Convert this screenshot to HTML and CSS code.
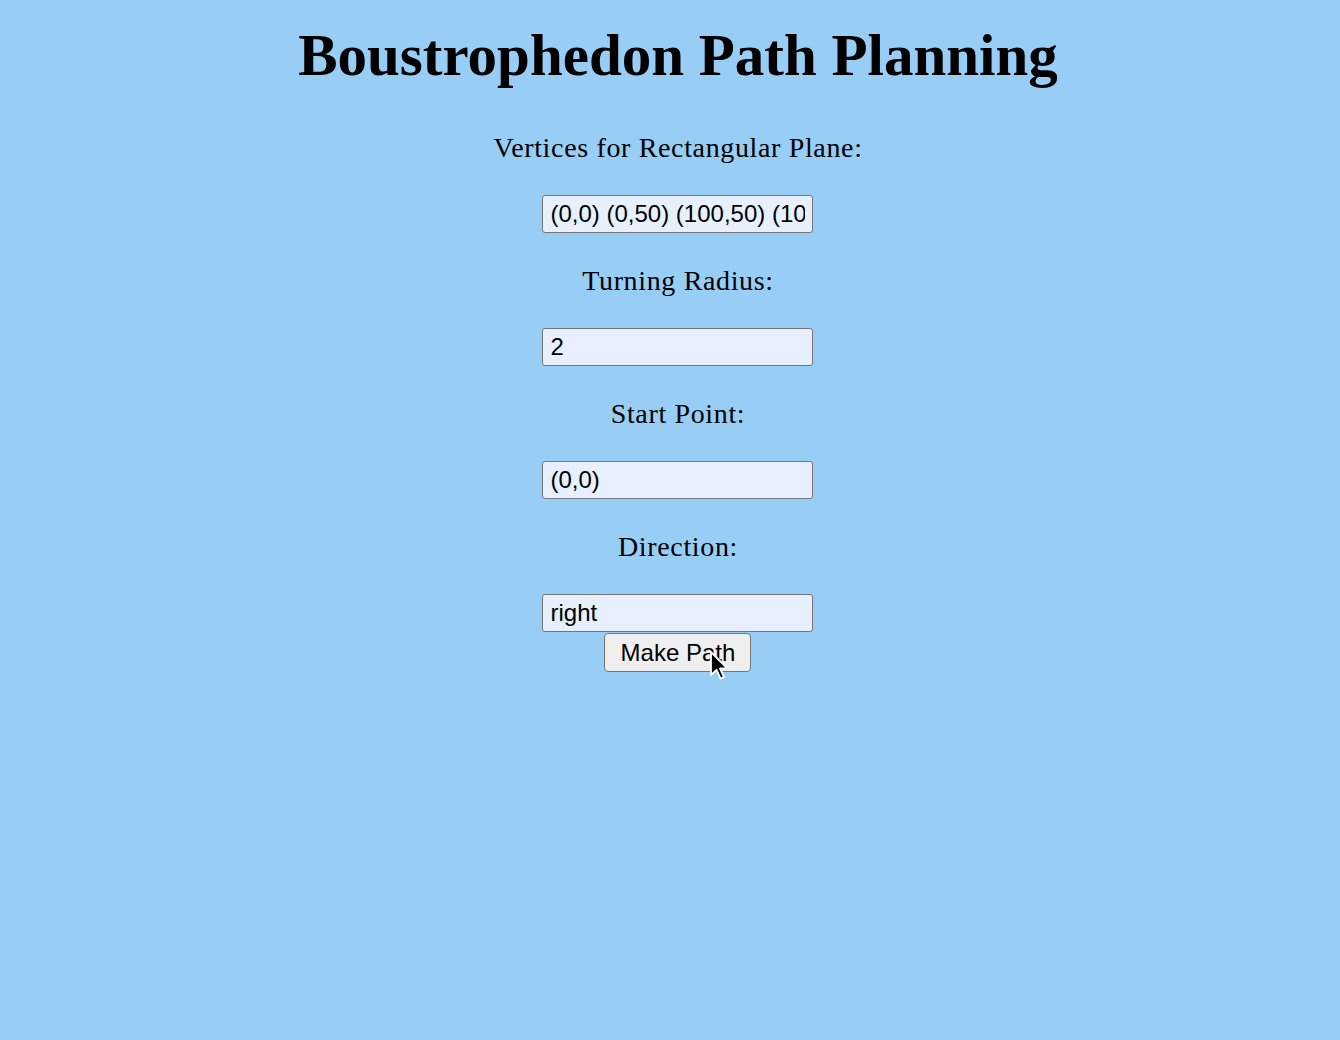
FILE: index.html
```html
<!DOCTYPE html>
<html lang="en">
<head>
<meta charset="utf-8">
<title>Boustrophedon Path Planning</title>
<link rel="stylesheet" href="styles.css">
</head>
<body>
<main class="page">
  <h1 class="title">Boustrophedon Path Planning</h1>
  <form class="form">
    <label class="label" for="vertices">Vertices for Rectangular Plane:</label>
    <input class="field" id="vertices" type="text" value="(0,0) (0,50) (100,50) (100,0)">
    <label class="label" for="radius">Turning Radius:</label>
    <input class="field" id="radius" type="text" value="2">
    <label class="label" for="start">Start Point:</label>
    <input class="field" id="start" type="text" value="(0,0)">
    <label class="label" for="direction">Direction:</label>
    <input class="field" id="direction" type="text" value="right">
    <div class="button-wrap">
      <button class="button" type="button">Make Path</button>
      <svg class="cursor" width="22" height="32" viewBox="0 0 22 32" aria-hidden="true">
        <path d="M2 2 L2 25 L7.5 19.8 L11.5 28.5 L15 27 L11 18.5 L18.5 18.5 Z" fill="#000" stroke="#fff" stroke-width="1.8" stroke-linejoin="round"/>
      </svg>
    </div>
  </form>
</main>
</body>
</html>
```

FILE: styles.css
```css
html, body {
  margin: 0;
  padding: 0;
  background: #98cdf6;
}

body {
  font-family: "Liberation Serif", "Times New Roman", serif;
  color: #000;
  min-height: 1040px;
}

.page {
  display: flex;
  flex-direction: column;
  align-items: center;
  padding-left: 16px;
}

.title {
  margin: 20px 0 0;
  font-size: 59px;
  line-height: 70px;
  font-weight: bold;
}

.form {
  display: flex;
  flex-direction: column;
  align-items: center;
}

.label {
  display: block;
  font-size: 28px;
  letter-spacing: 0.65px;
  line-height: 30px;
  margin: 33px 0 32px;
}

.title + .form .label:first-child {
  margin-top: 43px;
}

.field {
  box-sizing: border-box;
  width: 271px;
  height: 38px;
  margin: 0;
  padding: 0 7px;
  border: 1px solid #767676;
  border-radius: 3px;
  background: #e8f0fe;
  font-family: "Liberation Sans", Arial, sans-serif;
  font-size: 24px;
  color: #000;
  outline: none;
}

.button-wrap {
  position: relative;
  margin-top: 1px;
}

.button {
  box-sizing: border-box;
  width: 147px;
  height: 39px;
  margin: 0;
  padding: 0 12px;
  border: 1px solid #767676;
  border-radius: 4px;
  background: #efefef;
  font-family: "Liberation Sans", Arial, sans-serif;
  font-size: 24px;
  color: #000;
}

.cursor {
  position: absolute;
  left: 105px;
  top: 17px;
}
```
